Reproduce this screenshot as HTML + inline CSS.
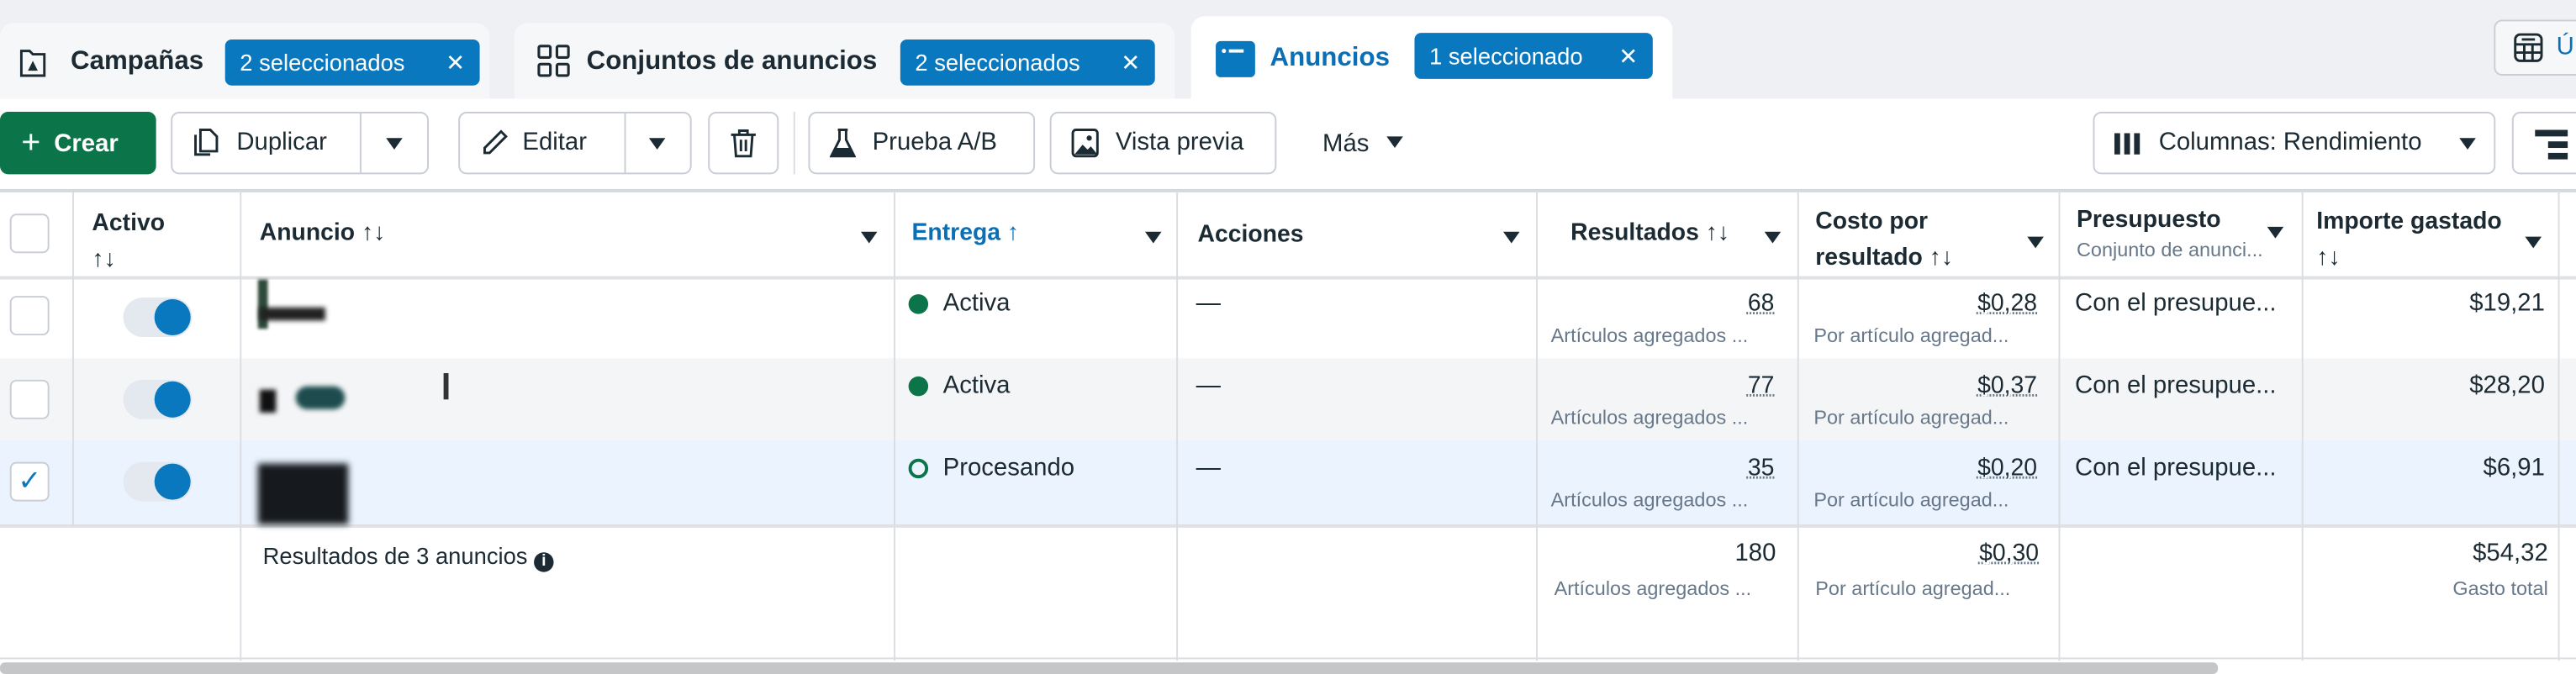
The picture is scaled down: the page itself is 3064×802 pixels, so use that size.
<!DOCTYPE html>
<html><head><meta charset="utf-8"><style>
html,body{margin:0;padding:0;width:3064px;height:800px;overflow:hidden;background:#fff}
#w{position:absolute;left:0;top:0;width:1568px;height:410px;transform:scale(1.9541,1.956);transform-origin:0 0;font-family:"Liberation Sans",sans-serif;color:#1c2b33;background:#fff}
.a{position:absolute}
.tabbar{left:0;top:0;width:1568px;height:60px;background:#eef0f3}
.tab{top:14px;height:46px;background:#f6f7f9;border-radius:8px 8px 0 0}
.tab.act{top:10px;height:50px;background:#fff}
.tt{font-size:16px;font-weight:bold;top:29px}
.pill{top:24px;height:28px;background:#0a78be;color:#fff;border-radius:4px;font-size:14px;line-height:28px;padding:0 9px;box-sizing:border-box}
.btn{top:68px;height:38px;border:1px solid #c9ced6;border-radius:5px;box-sizing:border-box;background:#fff;font-size:15px;line-height:36px}
.tri{display:inline-block;width:0;height:0;border-left:5px solid transparent;border-right:5px solid transparent;border-top:7px solid #1c2b33}
.vl{top:116px;width:1px;height:286px;background:#dadde1}
.hl{left:0;width:1568px;height:1px;background:#dadde1}
.h{font-size:14.5px;font-weight:bold}
.sub{font-size:12px;color:#67788a}
.r{text-align:right}
.num{font-size:14.5px;text-decoration:underline dotted #67788a}
.cb{left:6px;width:24px;height:24px;border:1px solid #c9ced6;border-radius:4px;box-sizing:border-box;background:#fff}
.tg{left:75px;width:42px;height:24px;border-radius:12px;background:#e4e9ef}
.tg:after{content:"";position:absolute;right:1px;top:1px;width:22px;height:22px;border-radius:11px;background:#0a78be}
.t{font-size:15px}
</style></head><body><div id="w">
<div class="a tabbar"></div>
<div class="a tab" style="left:0;width:298px"></div>
<svg class="a" style="left:12px;top:29px" width="16" height="18" viewBox="0 0 16 18"><path d="M1 2h5l2 2h7v13H1z" fill="none" stroke="#1c2b33" stroke-width="1.5"/><path d="M8 8l-3 6h6z" fill="#1c2b33"/></svg>
<div class="a tt" style="left:43px">Campañas</div>
<div class="a pill" style="left:137px;width:155px">2 seleccionados<span style="position:absolute;right:9px">✕</span></div>
<div class="a tab" style="left:313px;width:402px"></div>
<svg class="a" style="left:327px;top:27px" width="20" height="20" viewBox="0 0 20 20" fill="none" stroke="#1c2b33" stroke-width="1.6"><rect x="1" y="1" width="7" height="7" rx="1"/><rect x="12" y="1" width="7" height="7" rx="1"/><rect x="1" y="12" width="7" height="7" rx="1"/><rect x="12" y="12" width="7" height="7" rx="1"/></svg>
<div class="a tt" style="left:357px">Conjuntos de anuncios</div>
<div class="a pill" style="left:548px;width:155px">2 seleccionados<span style="position:absolute;right:9px">✕</span></div>
<div class="a tab act" style="left:725px;width:293px"></div>
<svg class="a" style="left:740px;top:24px" width="24" height="24" viewBox="0 0 24 24"><rect x="0" y="1" width="24" height="22" rx="3" fill="#0a78be"/><circle cx="5" cy="7" r="1.3" fill="#fff"/><rect x="8" y="6" width="9" height="2" fill="#fff"/></svg>
<div class="a tt" style="left:773px;color:#0a6fb4;top:27px">Anuncios</div>
<div class="a pill" style="left:861px;width:145px;top:20px">1 seleccionado<span style="position:absolute;right:9px">✕</span></div>
<div class="a" style="left:1518px;top:12px;width:60px;height:34px;border:1px solid #c9ced6;border-radius:5px;box-sizing:border-box;background:#f6f7f9"></div>
<svg class="a" style="left:1530px;top:20px" width="18" height="18" viewBox="0 0 18 18" fill="none" stroke="#1c2b33" stroke-width="1.5"><rect x="1" y="1" width="16" height="16" rx="3"/><path d="M1 7h16M1 12h16M6.5 7v10M11.5 7v10M5 4h8"/></svg>
<div class="a" style="left:1556px;top:20px;font-size:15px;color:#0a6fb4">Ú</div>
<div class="a" style="left:0;top:68px;width:95px;height:38px;background:#0c7449;border-radius:5px;color:#fff;font-size:15px;font-weight:bold;line-height:38px"><span style="margin-left:13px;font-size:20px;font-weight:normal;vertical-align:-1px">+</span> <span style="margin-left:4px">Crear</span></div>
<div class="a btn" style="left:104px;width:157px"><svg style="position:absolute;left:12px;top:9px" width="16" height="18" viewBox="0 0 16 18" fill="none" stroke="#1c2b33" stroke-width="1.5"><path d="M5 1h6l4 4v9H5z"/><path d="M2 4v12h9"/></svg><span style="position:absolute;left:39px">Duplicar</span><span style="position:absolute;left:114px;top:0;width:1px;height:36px;background:#c9ced6"></span><span class="tri" style="position:absolute;left:130px;top:15px"></span></div>
<div class="a btn" style="left:279px;width:142px"><svg style="position:absolute;left:12px;top:9px" width="18" height="18" viewBox="0 0 18 18" fill="none" stroke="#1c2b33" stroke-width="1.5"><path d="M13 2l3 3L6 15H3v-3z"/></svg><span style="position:absolute;left:38px">Editar</span><span style="position:absolute;left:100px;top:0;width:1px;height:36px;background:#c9ced6"></span><span class="tri" style="position:absolute;left:115px;top:15px"></span></div>
<div class="a btn" style="left:431px;width:43px"><svg style="position:absolute;left:12px;top:9px" width="17" height="18" viewBox="0 0 17 18" fill="none" stroke="#1c2b33" stroke-width="1.5"><path d="M1 4h15M6 4V1.5h5V4M3 4l1 13h9l1-13M7 7v7M10 7v7"/></svg></div>
<div class="a" style="left:483px;top:68px;width:1px;height:38px;background:#dadde1"></div>
<div class="a btn" style="left:492px;width:138px"><svg style="position:absolute;left:12px;top:9px" width="16" height="19" viewBox="0 0 16 19"><path d="M5 1h6M6 1v6L1 17h14L10 7V1" fill="none" stroke="#1c2b33" stroke-width="1.5"/><path d="M3.5 12h9l2 5h-13z" fill="#1c2b33"/></svg><span style="position:absolute;left:38px">Prueba A/B</span></div>
<div class="a btn" style="left:639px;width:138px"><svg style="position:absolute;left:12px;top:9px" width="18" height="18" viewBox="0 0 18 18"><rect x="1" y="1" width="15" height="16" rx="2" fill="none" stroke="#1c2b33" stroke-width="1.5"/><path d="M2 16l5-6 3 3 2-2 4 5z" fill="#1c2b33"/><circle cx="11" cy="6" r="1.6" fill="#1c2b33"/></svg><span style="position:absolute;left:39px">Vista previa</span></div>
<div class="a" style="left:805px;top:79px;font-size:15px">Más <span class="tri" style="margin-left:6px;vertical-align:2px"></span></div>
<div class="a btn" style="left:1274px;width:245px"><svg style="position:absolute;left:12px;top:12px" width="16" height="13" viewBox="0 0 16 13" fill="#1c2b33"><rect x="0" y="0" width="3.5" height="13"/><rect x="6" y="0" width="3.5" height="13"/><rect x="12" y="0" width="3.5" height="13"/></svg><span style="position:absolute;left:39px">Columnas: Rendimiento</span><span class="tri" style="position:absolute;left:222px;top:15px"></span></div>
<div class="a btn" style="left:1529px;width:60px"><svg style="position:absolute;left:13px;top:10px" width="20" height="18" viewBox="0 0 20 18" fill="#1c2b33"><rect x="0" y="0" width="20" height="4"/><rect x="8" y="7" width="12" height="4"/><rect x="8" y="14" width="12" height="4"/></svg></div>
<div class="a hl" style="top:115px;height:2px;background:#d5d8dc"></div>
<div class="a hl" style="top:168px;height:2px;background:#dfe1e4"></div>
<div class="a" style="left:0;top:218px;width:1568px;height:50px;background:#f4f5f7"></div>
<div class="a" style="left:0;top:268px;width:1568px;height:51px;background:#eaf3fe"></div>
<div class="a hl" style="top:319px;height:2px;background:#dfe1e4"></div>
<div class="a hl" style="top:400px"></div>
<div class="a" style="left:0;top:403px;width:1350px;height:7px;background:#c4c6c8;border-radius:3px"></div>
<div class="a vl" style="left:44px;top:117px;height:203px"></div>
<div class="a vl" style="left:146px"></div>
<div class="a vl" style="left:544px"></div>
<div class="a vl" style="left:716px"></div>
<div class="a vl" style="left:935px"></div>
<div class="a vl" style="left:1094px"></div>
<div class="a vl" style="left:1253px"></div>
<div class="a vl" style="left:1401px"></div>
<div class="a vl" style="left:1557px"></div>
<div class="a cb" style="top:130px"></div>
<div class="a h" style="left:56px;top:125px;line-height:22px">Activo<br>↑↓</div>
<div class="a h" style="left:158px;top:134px">Anuncio ↑↓</div>
<span class="a tri" style="left:524px;top:141px"></span>
<div class="a h" style="left:555px;top:134px;color:#0a6fb4">Entrega ↑</div>
<span class="a tri" style="left:697px;top:141px"></span>
<div class="a h" style="left:729px;top:135px">Acciones</div>
<span class="a tri" style="left:915px;top:141px"></span>
<div class="a h" style="left:956px;top:134px">Resultados ↑↓</div>
<span class="a tri" style="left:1074px;top:141px"></span>
<div class="a h" style="left:1105px;top:124px;line-height:22px">Costo por<br>resultado ↑↓</div>
<span class="a tri" style="left:1234px;top:144px"></span>
<div class="a h" style="left:1264px;top:126px">Presupuesto</div>
<div class="a sub" style="left:1264px;top:145px">Conjunto de anunci...</div>
<span class="a tri" style="left:1380px;top:138px"></span>
<div class="a h" style="left:1410px;top:124px;line-height:22px">Importe gastado<br>↑↓</div>
<span class="a tri" style="left:1537px;top:144px"></span>
<div class="a cb" style="top:180px"></div>
<div class="a cb" style="top:231px"></div>
<div class="a cb" style="top:281px;color:#0a78be;font-size:17px;line-height:22px;text-align:center">✓</div>
<div class="a tg" style="top:181px"></div>
<div class="a tg" style="top:231px"></div>
<div class="a tg" style="top:281px"></div>
<div class="a" style="left:157px;top:170px;width:6px;height:30px;background:#2e4a3a;filter:blur(1px)"></div>
<div class="a" style="left:158px;top:187px;width:40px;height:8px;background:#222;filter:blur(1.5px)"></div>
<div class="a" style="left:158px;top:237px;width:10px;height:14px;background:#111;filter:blur(1.5px)"></div>
<div class="a" style="left:180px;top:235px;width:30px;height:14px;background:#1e4c4e;border-radius:7px;filter:blur(1.5px)"></div>
<div class="a" style="left:270px;top:227px;width:3px;height:16px;background:#333"></div>
<div class="a" style="left:157px;top:282px;width:55px;height:37px;background:#161a1e;filter:blur(2px)"></div>
<div class="a" style="left:553px;top:179px;width:12px;height:12px;border-radius:6px;background:#0c7449"></div>
<div class="a t" style="left:574px;top:176px">Activa</div>
<div class="a" style="left:553px;top:229px;width:12px;height:12px;border-radius:6px;background:#0c7449"></div>
<div class="a t" style="left:574px;top:226px">Activa</div>
<div class="a" style="left:553px;top:279px;width:12px;height:12px;border-radius:6px;border:2px solid #0c7449;box-sizing:border-box"></div>
<div class="a t" style="left:574px;top:276px">Procesando</div>
<div class="a t" style="left:728px;top:176px">—</div>
<div class="a t" style="left:728px;top:226px">—</div>
<div class="a t" style="left:728px;top:276px">—</div>
<div class="a r" style="left:940px;width:140px;top:176px"><span class="num">68</span></div>
<div class="a sub" style="left:944px;top:197px">Artículos agregados ...</div>
<div class="a r" style="left:940px;width:140px;top:226px"><span class="num">77</span></div>
<div class="a sub" style="left:944px;top:247px">Artículos agregados ...</div>
<div class="a r" style="left:940px;width:140px;top:276px"><span class="num">35</span></div>
<div class="a sub" style="left:944px;top:297px">Artículos agregados ...</div>
<div class="a r" style="left:1100px;width:140px;top:176px"><span class="num">$0,28</span></div>
<div class="a sub" style="left:1104px;top:197px">Por artículo agregad...</div>
<div class="a r" style="left:1100px;width:140px;top:226px"><span class="num">$0,37</span></div>
<div class="a sub" style="left:1104px;top:247px">Por artículo agregad...</div>
<div class="a r" style="left:1100px;width:140px;top:276px"><span class="num">$0,20</span></div>
<div class="a sub" style="left:1104px;top:297px">Por artículo agregad...</div>
<div class="a t" style="left:1263px;top:176px">Con el presupue...</div>
<div class="a t" style="left:1263px;top:226px">Con el presupue...</div>
<div class="a t" style="left:1263px;top:276px">Con el presupue...</div>
<div class="a t r" style="left:1410px;width:139px;top:176px">$19,21</div>
<div class="a t r" style="left:1410px;width:139px;top:226px">$28,20</div>
<div class="a t r" style="left:1410px;width:139px;top:276px">$6,91</div>
<div class="a" style="left:160px;top:330px;font-size:14px">Resultados de 3 anuncios <span style="display:inline-block;width:12px;height:12px;border-radius:6px;background:#1c2b33;color:#fff;font-size:10px;line-height:12px;text-align:center;font-weight:bold;vertical-align:-1px">i</span></div>
<div class="a t r" style="left:940px;width:141px;top:328px">180</div>
<div class="a sub" style="left:946px;top:351px">Artículos agregados ...</div>
<div class="a r" style="left:1100px;width:141px;top:328px"><span class="num">$0,30</span></div>
<div class="a sub" style="left:1105px;top:351px">Por artículo agregad...</div>
<div class="a t r" style="left:1410px;width:141px;top:328px">$54,32</div>
<div class="a sub r" style="left:1410px;width:141px;top:351px">Gasto total</div>
</div></body></html>
